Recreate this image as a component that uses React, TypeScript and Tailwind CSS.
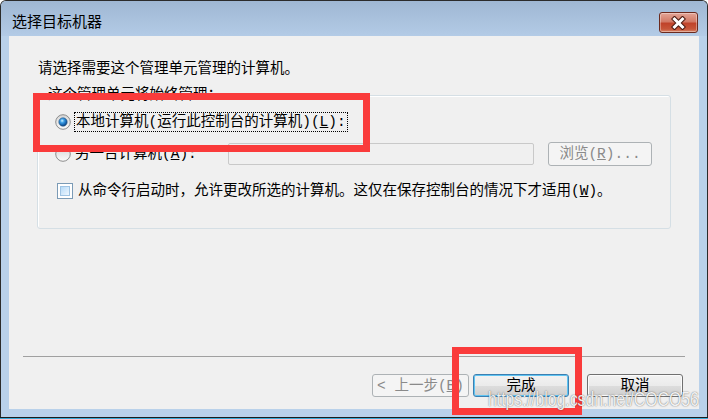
import React from 'react';

const RadioDot: React.FC<{ checked?: boolean; id: string }> = ({ checked, id }) => (
  <svg width="16" height="16" viewBox="0 0 16 16" className="shrink-0">
    <defs>
      <linearGradient id={`${id}-ring`} x1="0" y1="0" x2="0" y2="1">
        <stop offset="0" stopColor="#d4d4d4" />
        <stop offset="1" stopColor="#fbfbfb" />
      </linearGradient>
      <radialGradient id={`${id}-dot`} cx="0.4" cy="0.35" r="0.65">
        <stop offset="0" stopColor="#cdf3ff" />
        <stop offset="0.35" stopColor="#3fa0e6" />
        <stop offset="0.8" stopColor="#125ea8" />
        <stop offset="1" stopColor="#0b3d73" />
      </radialGradient>
    </defs>
    <circle cx="8" cy="8" r="7.3" fill={`url(#${id}-ring)`} stroke="#8d8d8d" strokeWidth="1" />
    {checked && <circle cx="8" cy="8" r="4.2" fill={`url(#${id}-dot)`} stroke="#2c5a88" strokeWidth="0.6" />}
  </svg>
);

const CheckBox: React.FC = () => (
  <div className="w-[16px] h-[16px] shrink-0 border border-[#7b9bb6] bg-white p-[2px]">
    <div className="w-full h-full border border-[#9fc4e4] bg-[linear-gradient(135deg,#b7dbf8,#eef7ff)]" />
  </div>
);

const App: React.FC = () => {
  return (
    <div
      className="relative w-[708px] h-[419px] flex flex-col overflow-hidden text-black"
      style={{ fontFamily: '"Liberation Mono", "Noto Sans CJK SC", monospace' }}
    >
      {/* window frame */}
      <div className="flex-1 flex flex-col bg-[#b9d1ea] border-x border-t border-[#2b2b2b] rounded-t-[6px]">
        <div className="h-[35px] flex items-start justify-between bg-[linear-gradient(180deg,#9fb7d3,#b3cbe6)] rounded-t-[5px] pl-[11px] pr-[9px]">
          <span className="pt-[14px] text-[15px] leading-[18px]">选择目标机器</span>
          <button className="mt-[11px] w-[39px] h-[21px] flex items-center justify-center rounded-[3px] border border-[#6b2a1e] bg-[linear-gradient(180deg,#e3a597_0%,#d27a66_45%,#c0432a_55%,#c75639_85%,#d98a6e_100%)] shadow-[inset_0_0_0_1px_rgba(255,255,255,0.35)]">
            <svg width="15" height="14" viewBox="0 0 15 14">
              <path d="M3.5 3 L11.5 11 M11.5 3 L3.5 11" stroke="#4b1a10" strokeWidth="5" strokeLinecap="square" />
              <path d="M3.5 3 L11.5 11 M11.5 3 L3.5 11" stroke="#ffffff" strokeWidth="3" strokeLinecap="square" />
            </svg>
          </button>
        </div>

        <div className="flex-1 flex px-[8px]">
          <div className="flex-1 flex flex-col bg-[#f0f0f0] text-[14.5px] leading-[18px]">
            <div className="pl-[28px] pt-[24px]">
              <div className="pl-[1px]">请选择需要这个管理单元管理的计算机。</div>

              <div className="relative mt-[17px] w-[634px] h-[134px] border border-[#d5dfe5] rounded-[3px] shadow-[inset_1px_1px_0_#ffffff] pl-[17px] pt-[16px]">
                <span className="absolute -top-[10px] left-[7px] px-[3px] bg-[#f0f0f0]">这个管理单元将始终管理：</span>

                <div className="flex items-center h-[20px]">
                  <RadioDot checked id="r1" />
                  <span className="ml-[3px] border border-dotted border-black px-[1px] leading-[18px]">
                    本地计算机(运行此控制台的计算机)(<u>L</u>):
                  </span>
                </div>

                <div className="flex items-center h-[24px] mt-[10px]">
                  <RadioDot id="r2" />
                  <span className="ml-[4px] w-[153px]">另一台计算机(<u>A</u>):</span>
                  <div className="w-[306px] h-[22px] border border-[#c9c9c9] rounded-[2px] bg-[#f0f0f0]" />
                  <button className="ml-[14px] w-[104px] h-[24px] border border-[#adb2b5] rounded-[3px] bg-[#f4f4f4] text-[#8a8a8a] text-[14.5px] leading-[18px]">
                    浏览(<u>R</u>)...
                  </button>
                </div>

                <div className="flex items-center h-[18px] mt-[16px] pl-[2px]">
                  <CheckBox />
                  <span className="ml-[5px] whitespace-nowrap">从命令行启动时，允许更改所选的计算机。这仅在保存控制台的情况下才适用(<u>W</u>)。</span>
                </div>
              </div>
            </div>

            <div className="mt-auto mx-[14px] border-t border-[#a0a0a0]" />
            <div className="flex justify-end pr-[16px] mt-[17px] mb-[12px]">
              <button className="w-[97px] h-[23px] border border-[#adb2b5] rounded-[3px] bg-[#f4f4f4] text-[#8a8a8a] leading-[18px] whitespace-nowrap">
                &lt; 上一步(<u>B</u>)
              </button>
              <button className="ml-[4px] w-[96px] h-[23px] border border-[#3c7fb1] rounded-[3px] shadow-[inset_0_0_0_1px_#5fc4f2] bg-[linear-gradient(180deg,#f2f2f2_0%,#ebebeb_50%,#dddddd_51%,#cfcfcf_100%)] leading-[18px]">
                完成
              </button>
              <button className="ml-[18px] w-[96px] h-[23px] border border-[#707070] rounded-[3px] shadow-[inset_0_0_0_1px_#fbfbfb] bg-[linear-gradient(180deg,#f2f2f2_0%,#ebebeb_50%,#dddddd_51%,#cfcfcf_100%)] leading-[18px]">
                取消
              </button>
            </div>
          </div>
        </div>

        <div className="h-[8px]" />
      </div>
      <div className="h-px bg-[#1c1c1c]" />
      <div className="h-px bg-[#36a9d6]" />

      {/* annotations */}
      <div className="absolute left-[33px] top-[93px] w-[337px] h-[59px] border-[7px] border-[#fa3b3b]" />
      <div className="absolute left-[452px] top-[347px] w-[130px] h-[68px] border-[7px] border-[#fa3b3b]" />
      <div
        className="absolute left-[488px] top-[388px] text-[20px] leading-[22px] text-white/90 scale-x-[0.79] origin-left whitespace-nowrap [text-shadow:0_0_1.5px_rgba(0,0,0,0.7)]"
        style={{ fontFamily: '"Liberation Sans", sans-serif' }}
      >
        https://blog.csdn.net/COCO56
      </div>
    </div>
  );
};

export default App;
